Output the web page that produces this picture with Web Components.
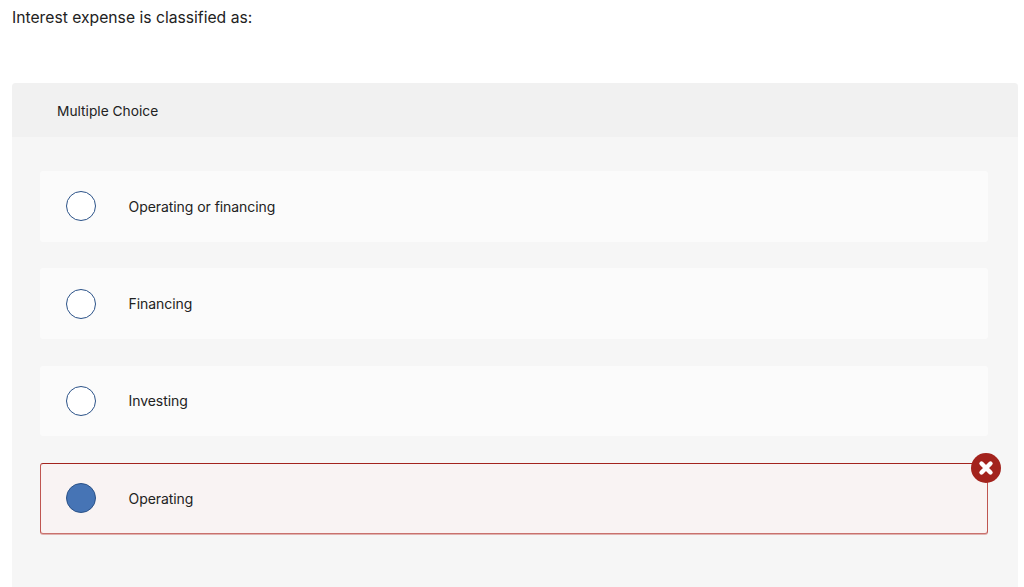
<!DOCTYPE html>
<html>
<head>
<meta charset="utf-8">
<title>Multiple Choice</title>
<style>
  html, body { margin: 0; height: 587px; overflow: hidden; background: #fff; }
  body { font-family: "Inter", "Liberation Sans", sans-serif; color: #222; }
</style>
</head>
<body>
<quiz-question prompt="Interest expense is classified as:" label="Multiple Choice">
  <quiz-option>Operating or financing</quiz-option>
  <quiz-option>Financing</quiz-option>
  <quiz-option>Investing</quiz-option>
  <quiz-option selected wrong>Operating</quiz-option>
</quiz-question>

<script>
class QuizQuestion extends HTMLElement {
  constructor() {
    super();
    this.attachShadow({ mode: "open" });
    this.shadowRoot.innerHTML = `
      <style>
        :host { display: block; padding: 8px 6px 0 12px; }
        .prompt { font-size: 15.7px; line-height: 19px; height: 75px; color: #222; }
        .panel { background: #f6f6f6; border-radius: 4px 4px 0 0; height: 504px; overflow: hidden; }
        .head { box-sizing: border-box; height: 54px; background: #f1f1f1; display: flex; align-items: center; padding: 1px 0 0 45px; font-size: 13.75px; color: #222; }
        .list { display: flex; flex-direction: column; gap: 26.67px; padding: 34px 30px 0 28px; }
      </style>
      <div class="prompt"></div>
      <div class="panel">
        <div class="head"></div>
        <div class="list"><slot></slot></div>
      </div>`;
    this.shadowRoot.querySelector(".prompt").textContent = this.getAttribute("prompt");
    this.shadowRoot.querySelector(".head").textContent = this.getAttribute("label");
  }
}

class QuizOption extends HTMLElement {
  constructor() {
    super();
    this.attachShadow({ mode: "open" });
    this.shadowRoot.innerHTML = `
      <style>
        :host { display: block; position: relative; }
        .row { box-sizing: border-box; height: 70.67px; display: flex; align-items: center; gap: 32.5px; padding-left: 26px; background: #fbfbfb; border-radius: 3px; font-size: 14px; letter-spacing: -0.06px; color: #222; }
        .radio { box-sizing: border-box; width: 30px; height: 30px; border-radius: 50%; border: 1px solid #2b5288; background: #fff; flex: none; }
        :host([selected]) .radio { background: #4674b5; }
        :host([wrong]) .row { background: #f9f3f3; border: 1px solid #bf5550; border-top-color: #a3231d; border-bottom-color: #c9716d; padding-left: 25px; box-shadow: 0 1px 0 rgba(196, 96, 92, .45); }
        .mark { display: none; position: absolute; top: -10px; right: -13px; width: 30px; height: 30px; }
        :host([wrong]) .mark { display: block; }
      </style>
      <div class="row"><span class="radio"></span><span><slot></slot></span></div>
      <svg class="mark" viewBox="0 0 30 30">
        <circle cx="15" cy="15" r="15" fill="#a3231d"/>
        <path d="M10.5 10.5l9 9M19.5 10.5l-9 9" stroke="#fff" stroke-width="4.4" stroke-linecap="round" fill="none"/>
      </svg>`;
  }
}

customElements.define("quiz-question", QuizQuestion);
customElements.define("quiz-option", QuizOption);
</script>
</body>
</html>
